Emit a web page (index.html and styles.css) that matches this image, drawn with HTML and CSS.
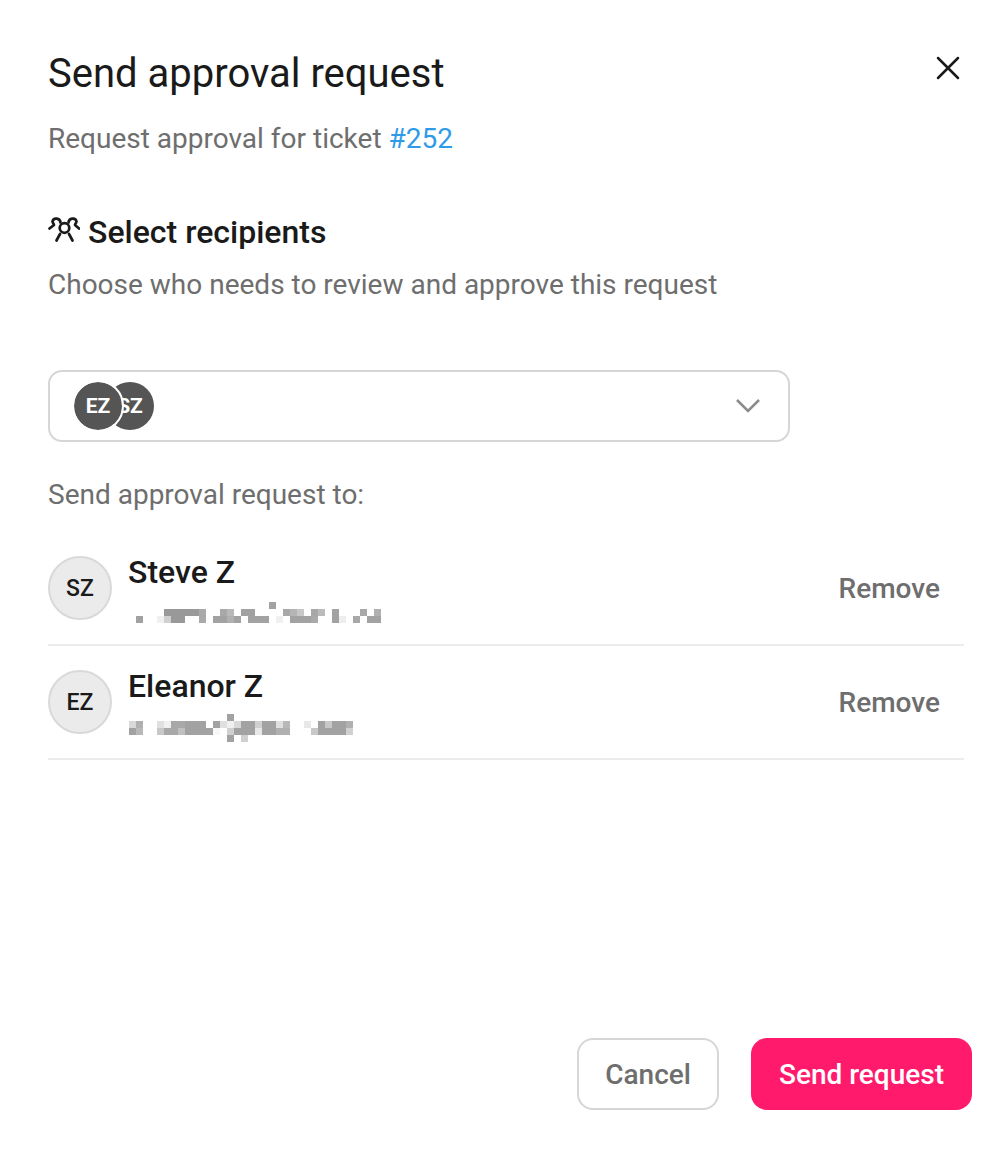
FILE: index.html
```html
<!DOCTYPE html>
<html lang="en">
<head>
  <meta charset="UTF-8" />
  <title>Send approval request</title>
  <link rel="stylesheet" href="styles.css">
</head>
<body>
  <div class="dialog">
    <div class="top">
      <h1>Send approval request</h1>
      <svg class="close" width="24" height="24" viewBox="0 0 24 24" fill="none" stroke="#1a1a1a" stroke-width="2.5" stroke-linecap="round"><path d="M2 2 22 22M22 2 2 22"/></svg>
    </div>
    <p class="sub">Request approval for ticket <a href="#">#252</a></p>

    <div class="section-title">
      <svg class="people" width="32" height="26" viewBox="0 0 32 26" fill="none" stroke="#1a1a1a" stroke-width="2.7" stroke-linecap="round" stroke-linejoin="round">
        <circle cx="16.500" cy="12" r="4.800"/>
        <path d="M12 18 8.500 24.500M21 18l3.500 6.500"/>
        <path d="M12.500 6.500C12 2 5.500 1 4.500 5.500 4.500 7 6 8 6 9L1.500 12.500"/>
        <path d="M20.500 6.500C21 2 27.500 1 28.500 5.500 28.500 7 27 8 27 9L31 12.500"/>
      </svg>
      <h2>Select recipients</h2>
    </div>
    <p class="sub hint">Choose who needs to review and approve this request</p>

    <div class="select">
      <div class="chips">
        <span class="chip">EZ</span>
        <span class="chip under">SZ</span>
      </div>
      <svg width="26" height="16" viewBox="0 0 26 16" fill="none" stroke="#8c8c8c" stroke-width="2.6"><path d="M2 2l11 11L24 2"/></svg>
    </div>

    <p class="sub to">Send approval request to:</p>

    <div class="person">
      <span class="avatar">SZ</span>
      <div class="info">
        <div class="name">Steve Z</div>
        <svg class="email" width="256" height="30" viewBox="0 0 256 30" shape-rendering="crispEdges">
          <g transform="translate(1 2) scale(7 7)" fill="#a2a2a2">
            <rect x="20" y="0" width="1" height="1"/>
            <rect x="5" y="1" width="5" height="1" fill="#999"/><rect x="10" y="1" width="1" height="1" fill="#aaa"/>
            <rect x="13" y="1" width="1" height="1" fill="#a8a8a8"/><rect x="14" y="1" width="1" height="1" fill="#b8b8b8"/>
            <rect x="16" y="1" width="2" height="1"/>
            <rect x="22" y="1" width="1" height="1" fill="#a8a8a8"/><rect x="23" y="1" width="1" height="1" fill="#b5b5b5"/><rect x="24" y="1" width="1" height="1" fill="#c8c8c8"/>
            <rect x="26" y="1" width="1" height="1" fill="#a8a8a8"/><rect x="27" y="1" width="1" height="1" fill="#bbb"/>
            <rect x="29" y="1" width="1" height="1"/><rect x="33" y="1" width="1" height="1" fill="#a8a8a8"/><rect x="35" y="1" width="1" height="1" fill="#b0b0b0"/>
            <rect x="1" y="2" width="1" height="1"/><rect x="4" y="2" width="1" height="1" fill="#f0f0f0"/><rect x="5" y="2" width="1" height="1" fill="#d0d0d0"/>
            <rect x="6" y="2" width="2" height="1" fill="#999"/><rect x="10" y="2" width="1" height="1" fill="#aaa"/>
            <rect x="12" y="2" width="2" height="1"/><rect x="14" y="2" width="1" height="1" fill="#b0b0b0"/><rect x="15" y="2" width="1" height="1"/>
            <rect x="17" y="2" width="3" height="1"/><rect x="21" y="2" width="1" height="1" fill="#f0f0f0"/>
            <rect x="23" y="2" width="3" height="1"/><rect x="26" y="2" width="1" height="1" fill="#aaa"/>
            <rect x="29" y="2" width="1" height="1"/><rect x="30" y="2" width="1" height="1" fill="#eee"/>
            <rect x="32" y="2" width="1" height="1" fill="#a8a8a8"/><rect x="34" y="2" width="2" height="1"/>
          </g>
        </svg>
      </div>
      <span class="remove">Remove</span>
    </div>
    <div class="person">
      <span class="avatar">EZ</span>
      <div class="info">
        <div class="name">Eleanor Z</div>
        <svg class="email" width="256" height="30" viewBox="0 0 256 30" shape-rendering="crispEdges">
          <g transform="translate(1 0) scale(7 7)" fill="#a2a2a2">
            <rect x="14" y="0" width="1" height="1"/>
            <rect x="0" y="1" width="1" height="1" fill="#d8d8d8"/><rect x="1" y="1" width="1" height="1" fill="#b0b0b0"/>
            <rect x="4" y="1" width="1" height="1" fill="#e0e0e0"/><rect x="5" y="1" width="1" height="1" fill="#f0f0f0"/>
            <rect x="6" y="1" width="2" height="1" fill="#a8a8a8"/><rect x="8" y="1" width="3" height="1"/>
            <rect x="12" y="1" width="1" height="1"/><rect x="13" y="1" width="1" height="1" fill="#e0e0e0"/><rect x="14" y="1" width="1" height="1" fill="#f0f0f0"/><rect x="15" y="1" width="1" height="1" fill="#d8d8d8"/>
            <rect x="16" y="1" width="2" height="1"/><rect x="18" y="1" width="1" height="1" fill="#d0d0d0"/>
            <rect x="19" y="1" width="2" height="1"/><rect x="21" y="1" width="1" height="1" fill="#e0e0e0"/><rect x="22" y="1" width="1" height="1" fill="#b8b8b8"/>
            <rect x="25" y="1" width="1" height="1" fill="#e8e8e8"/><rect x="27" y="1" width="1" height="1"/><rect x="28" y="1" width="1" height="1" fill="#c8c8c8"/>
            <rect x="29" y="1" width="2" height="1"/><rect x="31" y="1" width="1" height="1" fill="#b0b0b0"/>
            <rect x="0" y="2" width="1" height="1"/><rect x="1" y="2" width="1" height="1" fill="#b8b8b8"/>
            <rect x="4" y="2" width="1" height="1" fill="#c8c8c8"/><rect x="5" y="2" width="2" height="1" fill="#a8a8a8"/><rect x="7" y="2" width="1" height="1" fill="#c0c0c0"/>
            <rect x="8" y="2" width="4" height="1"/><rect x="12" y="2" width="1" height="1" fill="#f8f8f8"/><rect x="14" y="2" width="1" height="1" fill="#d0d0d0"/>
            <rect x="15" y="2" width="3" height="1"/><rect x="18" y="2" width="1" height="1" fill="#e8e8e8"/><rect x="19" y="2" width="2" height="1"/>
            <rect x="21" y="2" width="2" height="1" fill="#b0b0b0"/><rect x="26" y="2" width="1" height="1" fill="#c8c8c8"/>
            <rect x="27" y="2" width="4" height="1"/><rect x="31" y="2" width="1" height="1" fill="#d0d0d0"/>
            <rect x="14" y="3" width="1" height="1"/><rect x="16" y="3" width="1" height="1" fill="#d0d0d0"/>
          </g>
        </svg>
      </div>
      <span class="remove">Remove</span>
    </div>

    <div class="actions">
      <button class="btn cancel">Cancel</button>
      <button class="btn send">Send request</button>
    </div>
  </div>
</body>
</html>
```

FILE: styles.css
```css
* {
  box-sizing: border-box;
}
body {
  margin: 0;
  background: white;
  font-family: Roboto, "Liberation Sans", sans-serif;
  color: #1a1a1a;
}
.dialog {
  width: 1004px;
  height: 1158px;
  padding: 49px 32px 48px 48px;
  display: flex;
  flex-direction: column;
}
.top {
  display: flex;
  justify-content: space-between;
  align-items: flex-start;
  height: 50px;
}
h1 {
  margin: 0;
  font-size: 40px;
  line-height: 50px;
  font-weight: 400;
}
.close {
  margin: 7px 12px 0 0;
}
.sub {
  margin: 24px 0 0;
  font-size: 28px;
  line-height: 32px;
  color: #6e6e6e;
}
.sub a {
  color: #2f9be8;
  text-decoration: none;
}
.section-title {
  display: flex;
  align-items: center;
  gap: 8px;
  margin-top: 57px;
  height: 40px;
}
.people {
  margin-top: -6px;
}
h2 {
  margin: 0;
  font-size: 32px;
  line-height: 40px;
  font-weight: 500;
}
.hint {
  margin-top: 17px;
}
.select {
  width: 742px;
  height: 72px;
  margin-top: 69px;
  padding: 0 27px 0 24px;
  border: 2px solid #d6d6d6;
  border-radius: 14px;
  display: flex;
  align-items: center;
  justify-content: space-between;
}
.chips {
  display: flex;
}
.chip {
  width: 48px;
  height: 48px;
  border-radius: 50%;
  background: #555;
  color: white;
  font-size: 21px;
  font-weight: 700;
  display: flex;
  align-items: center;
  justify-content: center;
  position: relative;
  z-index: 1;
  outline: 2px solid white;
}
.chip.under {
  margin-left: -16px;
  z-index: 0;
  outline: none;
}
.to {
  margin-top: 37px;
}
.person {
  width: 916px;
  height: 114px;
  border-bottom: 2px solid #ececec;
  display: flex;
  align-items: center;
  gap: 16px;
  padding-right: 24px;
}
.to + .person {
  margin-top: 21px;
}
.avatar {
  width: 64px;
  height: 64px;
  border-radius: 50%;
  background: #ebebeb;
  border: 2px solid #d9d9d9;
  font-size: 23px;
  font-weight: 500;
  display: flex;
  align-items: center;
  justify-content: center;
  flex-shrink: 0;
}
.info {
  flex: 1;
  align-self: flex-start;
  padding-top: 22px;
}
.name {
  font-size: 32px;
  line-height: 36px;
  font-weight: 500;
}
.email {
  display: block;
  margin-top: 10px;
}
.remove {
  font-size: 28px;
  font-weight: 500;
  color: #6e6e6e;
}
.actions {
  margin-top: auto;
  display: flex;
  justify-content: flex-end;
  gap: 32px;
}
.btn {
  height: 72px;
  border-radius: 16px;
  font-family: inherit;
  font-size: 28px;
  font-weight: 500;
  padding: 0 28px;
  cursor: pointer;
}
.cancel {
  background: white;
  color: #6e6e6e;
  border: 2px solid #d6d6d6;
  padding: 0 26px;
}
.send {
  background: #ff1a6c;
  color: white;
  border: none;
}
```
